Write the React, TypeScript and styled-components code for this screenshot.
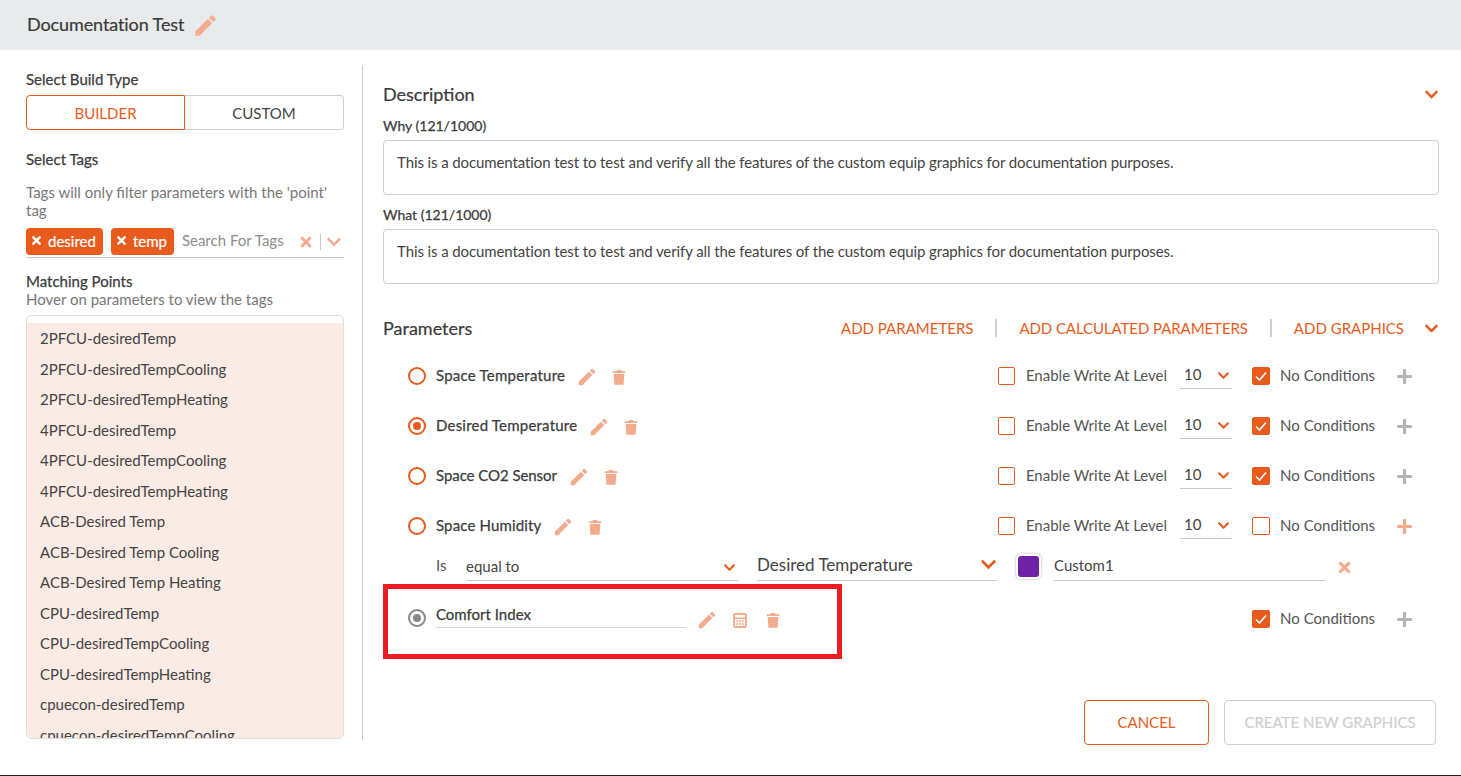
import React from 'react';
import styled, { createGlobalStyle } from 'styled-components';
import { FaTimes, FaChevronDown, FaPlus } from 'react-icons/fa';
import { MdEdit } from 'react-icons/md';

const ORANGE = '#e95b1c';
const PALE = '#f3ab8b';

const Global = createGlobalStyle`
  html, body { margin: 0; padding: 0; background: #fff; overflow: hidden; }
  body { font-family: Lato, "Open Sans", sans-serif; color: #444; font-size: 15px; }
  * { box-sizing: border-box; }
`;

const Page = styled.div`
  width: 1461px; height: 776px; display: flex; flex-direction: column;
  border-bottom: 1px solid #222; overflow: hidden;
`;
const Header = styled.header`
  height: 50px; flex: none; background: #e9eaec; display: flex; align-items: center;
  padding: 0 0 2px 27px; gap: 8px; font-size: 18px; letter-spacing: -0.1px; color: #3a3a3a; -webkit-text-stroke: 0.2px #3a3a3a;
`;
const Body = styled.div`display: flex; padding: 15px 22px 0 26px; flex: 1; min-height: 0;`;
const Side = styled.aside`
  width: 337px; height: 675px; flex: none; padding: 6px 18px 0 0; border-right: 1px solid #c9c9c9;
  display: flex; flex-direction: column;
`;
const Label = styled.div<{ $mt?: number }>`
  font-size: 15px; line-height: 17px; color: #3c3c3c; -webkit-text-stroke: 0.25px #3c3c3c;
  margin-top: ${p => p.$mt ?? 0}px;
`;
const Segments = styled.div`display: flex; height: 35px; margin-top: 7px;`;
const Segment = styled.div<{ $on?: boolean }>`
  flex: ${p => p.$on ? '0 0 159px' : '1'}; display: flex; align-items: center; justify-content: center; font-size: 15px;
  color: ${p => p.$on ? ORANGE : '#444'};
  border: 1px solid ${p => p.$on ? ORANGE : '#cfcfcf'};
  border-left-width: ${p => p.$on ? 1 : 0}px;
  border-radius: ${p => p.$on ? '4px 0 0 4px' : '0 4px 4px 0'};
`;
const Hint = styled.div<{ $mt?: number }>`
  font-size: 15px; line-height: 18px; color: #777; margin-top: ${p => p.$mt ?? 0}px;
`;
const TagRow = styled.div`
  display: flex; align-items: flex-start; height: 30px; margin-top: 9px;
  border-bottom: 1px solid #c9c9c9; flex: none;
`;
const Tag = styled.div`
  height: 27px; padding: 0 7px 2px 4px; background: ${ORANGE}; color: #fff; border-radius: 4px; display: flex; align-items: center;
  gap: 5px; font-size: 15px; margin-right: 8px; -webkit-text-stroke: 0.2px #fff;
`;
const Search = styled.span`color: #8d8d8d; font-size: 15px; flex: 1; line-height: 25px;`;
const TagIcon = styled.span<{ $mr?: number }>`
  display: inline-flex; color: ${PALE}; margin: 6px ${p => p.$mr ?? 0}px 0 0;
`;
const TagSep = styled.span`width: 1px; height: 16px; background: #c9c9c9; margin: 6px 5px 0 6px;`;
const List = styled.div`
  margin-top: 7px; height: 424px; flex: none; border: 1px solid #dedede; border-radius: 5px; overflow: hidden;
  padding-top: 7px; background: #fff;
`;
const ListFill = styled.div`background: #fbebe5; height: 100%;`;
const ListItem = styled.div`
  height: 30.5px; line-height: 30.5px; padding-left: 13px; font-size: 15px; color: #444;
`;
const Main = styled.main`flex: 1; padding: 14px 0 0 20px; min-width: 0;`;
const SectionHead = styled.div`
  display: flex; align-items: center; justify-content: space-between; height: 30px;
`;
const SectionTitle = styled.div`font-size: 18px; color: #3a3a3a; -webkit-text-stroke: 0.2px #3a3a3a;`;
const FieldLabel = styled.div<{ $mt: number }>`
  font-size: 14px; line-height: 17px; color: #3c3c3c; -webkit-text-stroke: 0.25px #3c3c3c; margin-top: ${p => p.$mt}px;
`;
const TextBox = styled.div`
  height: 55px; margin-top: 6px; border: 1px solid #cfcfcf; border-radius: 4px; padding: 12px 13px;
  font-size: 15px; line-height: 18px; color: #444; letter-spacing: -0.1px;
`;
const ParamHead = styled(SectionHead)`margin-top: 30px; padding-bottom: 2px;`;
const Actions = styled.div`display: flex; align-items: center; color: ${ORANGE}; font-size: 15px;`;
const ActionSep = styled.span`width: 2px; height: 18px; background: #d0d0d0; margin: 0 22px 0 22px;`;
const Tight = styled.span`letter-spacing: -0.08px;`;
const HeadChevron = styled.span`display: inline-flex; color: ${ORANGE}; margin-left: 20px;`;
const Rows = styled.div`margin-top: 7px; padding-left: 25px;`;
const Row = styled.div`display: flex; align-items: center; height: 50px;`;
const Radio = styled.span<{ $on?: boolean; $grey?: boolean }>`
  width: 18px; height: 18px; flex: none; border-radius: 50%; border: 2px solid ${p => p.$grey ? '#888' : ORANGE};
  display: flex; align-items: center; justify-content: center; margin: ${p => p.$grey ? '-2px' : '0'} 10px 0 0;
  &::after { content: ''; width: 8px; height: 8px; border-radius: 50%; display: ${p => p.$on ? 'block' : 'none'}; background: ${p => p.$grey ? '#888' : ORANGE}; }
`;
const ParamName = styled.span<{ $track: number }>`
  font-size: 15px; color: #3c3c3c; -webkit-text-stroke: 0.25px #3c3c3c; margin-right: 11px; padding-bottom: 2px;
  letter-spacing: ${p => p.$track}px;
`;
const IconBtn = styled.span<{ $gap?: number; $ml?: number }>`
  display: inline-flex; color: ${PALE}; margin: 2px ${p => p.$gap ?? 0}px 0 ${p => p.$ml ?? 0}px;
`;
const Right = styled.div`margin-left: auto; display: flex; align-items: center; padding-right: 26px;`;
const Box = styled.span<{ $on?: boolean; $wide?: boolean }>`
  width: ${p => p.$wide ? 18 : 17}px; height: 18px; border: 1px solid ${ORANGE}; border-radius: 2px; display: inline-flex;
  align-items: center; justify-content: center; background: ${p => p.$on ? ORANGE : '#fff'};
  margin-right: ${p => p.$wide ? 10 : 11}px; flex: none;
`;
const RowText = styled.span`font-size: 15px; color: #555; padding-bottom: 2px;`;
const Level = styled.span`
  width: 52px; height: 26px; margin: 0 20px 0 13px; display: flex; align-items: center; justify-content: space-between;
  border-bottom: 1px solid #c9c9c9; padding: 0 2px 4px 4px; font-size: 15px; color: #444;
`;
const SmallChevron = styled.span<{ $mr?: number; $top?: number }>`
  display: inline-flex; color: ${ORANGE}; margin: ${p => p.$top ?? 4}px ${p => p.$mr ?? 0}px 0 0;
`;
const Plus = styled.span<{ $on?: boolean }>`
  display: inline-flex; margin-left: 21px; color: ${p => p.$on ? PALE : '#b5b5b5'};
`;
const CondRow = styled.div`display: flex; align-items: center; height: 30px; padding-left: 28px;`;
const CondIs = styled.span`font-size: 15px; color: #555; width: 30px; margin-top: -2px;`;
const Underlined = styled.div<{ $w: number; $size?: number; $ml?: number; $up?: boolean }>`
  width: ${p => p.$w}px; height: 30px; margin-left: ${p => p.$ml ?? 0}px; border-bottom: 1px solid #c9c9c9;
  padding-bottom: ${p => p.$up ? 2 : 0}px;
  display: flex; align-items: center; justify-content: space-between; font-size: ${p => p.$size ?? 15}px;
  color: #444; flex: none;
`;
const Swatch = styled.span`
  width: 25px; height: 25px; flex: none; border-radius: 5px; background: #6f22a8; border: 2px solid #fff;
  box-shadow: 0 0 3px rgba(0,0,0,.3); margin: 0 13px 0 19px;
`;
const HighlightRow = styled.div`display: flex; align-items: center; margin-top: 3px;`;
const Highlight = styled.div`
  width: 459px; height: 75px; flex: none; margin-left: -25px; border: 5px solid #ed1c24;
`;
const HighlightInner = styled.div`display: flex; align-items: center; height: 60px; padding-left: 20px;`;
const NameInput = styled.div`
  width: 250px; height: 26px; padding-top: 3px; border-bottom: 1px solid #d5d5d5; font-size: 15px; color: #3c3c3c;
  -webkit-text-stroke: 0.25px #3c3c3c; margin: -8px 10px 0 0; line-height: 18px;
`;
const RaisedRight = styled(Right)`margin-top: -5px;`;
const Footer = styled.div`display: flex; justify-content: flex-end; gap: 15px; margin-top: 41px; padding-right: 3px;`;
const Btn = styled.div<{ $off?: boolean; $w: number }>`
  width: ${p => p.$w}px; height: 45px; padding-bottom: 2px; border-radius: 4px; display: flex; align-items: center; justify-content: center;
  font-size: 15px; border: 1px solid ${p => p.$off ? '#d0d0d0' : ORANGE}; color: ${p => p.$off ? '#cfcfcf' : ORANGE};
  -webkit-text-stroke: ${p => p.$off ? '0.2px #cfcfcf' : '0'};
`;

const Calc = () => (
  <svg width="14" height="15" viewBox="0 0 14 15" fill="none" stroke={PALE} strokeWidth="1.8">
    <rect x="1" y="1" width="12" height="13" rx="1" />
    <path d="M1 5.2h12M3 8h2M6 8h2M9 8h2M3 11h2M6 11h2M9 11h2" strokeWidth="1.6" />
  </svg>
);
const Trash = () => (
  <svg width="14" height="16" viewBox="0 0 14 16" fill={PALE}>
    <path d="M.7 2.2h3.6L5 1h4l.7 1.2h3.6v1.9H.7z" />
    <path d="M1.6 4.9h10.8l-.8 10c0 .5-.4.9-1 .9H3.4c-.6 0-1-.4-1-.9z" />
  </svg>
);
const Check = () => (
  <svg width="14" height="12" viewBox="0 0 14 12" fill="none" stroke="#fff" strokeWidth="1.6">
    <path d="M2 6.5l3.5 3.5L12 2.5" />
  </svg>
);

const points = [
  '2PFCU-desiredTemp', '2PFCU-desiredTempCooling', '2PFCU-desiredTempHeating',
  '4PFCU-desiredTemp', '4PFCU-desiredTempCooling', '4PFCU-desiredTempHeating',
  'ACB-Desired Temp', 'ACB-Desired Temp Cooling', 'ACB-Desired Temp Heating',
  'CPU-desiredTemp', 'CPU-desiredTempCooling', 'CPU-desiredTempHeating',
  'cpuecon-desiredTemp', 'cpuecon-desiredTempCooling',
];
const params = [
  { name: 'Space Temperature', checked: true, track: 0.23 },
  { name: 'Desired Temperature', checked: true, on: true, track: 0.21 },
  { name: 'Space CO2 Sensor', checked: true, track: -0.06 },
  { name: 'Space Humidity', checked: false, track: 0.14 },
];
const text = 'This is a documentation test to test and verify all the features of the custom equip graphics for documentation purposes.';

const Conditions = ({ checked }: { checked: boolean }) => (
  <>
    <Box $wide $on={checked}>{checked && <Check />}</Box>
    <RowText>No Conditions</RowText>
    <Plus $on={!checked}><FaPlus size={17} /></Plus>
  </>
);

export default function App() {
  return (
    <Page>
      <Global />
      <Header>
        Documentation Test
        <IconBtn><MdEdit size={27} /></IconBtn>
      </Header>
      <Body>
        <Side>
          <Label>Select Build Type</Label>
          <Segments>
            <Segment $on>BUILDER</Segment>
            <Segment>CUSTOM</Segment>
          </Segments>
          <Label $mt={21}>Select Tags</Label>
          <Hint $mt={15}>Tags will only filter parameters with the 'point' tag</Hint>
          <TagRow>
            <Tag><FaTimes size={13} />desired</Tag>
            <Tag><FaTimes size={13} />temp</Tag>
            <Search>Search For Tags</Search>
            <TagIcon><FaTimes size={16} /></TagIcon>
            <TagSep />
            <TagIcon $mr={2}><FaChevronDown size={16} /></TagIcon>
          </TagRow>
          <Label $mt={15}>Matching Points</Label>
          <Hint>Hover on parameters to view the tags</Hint>
          <List>
            <ListFill>
              {points.map(p => <ListItem key={p}>{p}</ListItem>)}
            </ListFill>
          </List>
        </Side>
        <Main>
          <SectionHead>
            <SectionTitle>Description</SectionTitle>
            <HeadChevron><FaChevronDown size={15} /></HeadChevron>
          </SectionHead>
          <FieldLabel $mt={8}>Why (121/1000)</FieldLabel>
          <TextBox>{text}</TextBox>
          <FieldLabel $mt={11}>What (121/1000)</FieldLabel>
          <TextBox>{text}</TextBox>
          <ParamHead>
            <SectionTitle>Parameters</SectionTitle>
            <Actions>
              ADD PARAMETERS<ActionSep /><Tight>ADD CALCULATED PARAMETERS</Tight><ActionSep />ADD GRAPHICS
              <HeadChevron><FaChevronDown size={15} /></HeadChevron>
            </Actions>
          </ParamHead>
          <Rows>
            {params.map(p => (
              <Row key={p.name}>
                <Radio $on={p.on} />
                <ParamName $track={p.track}>{p.name}</ParamName>
                <IconBtn $gap={14}><MdEdit size={22} /></IconBtn>
                <IconBtn><Trash /></IconBtn>
                <Right>
                  <Box />
                  <RowText>Enable Write At Level</RowText>
                  <Level>10<SmallChevron><FaChevronDown size={13} /></SmallChevron></Level>
                  <Conditions checked={p.checked} />
                </Right>
              </Row>
            ))}
            <CondRow>
              <CondIs>Is</CondIs>
              <Underlined $w={272}>
                equal to
                <SmallChevron $mr={2}><FaChevronDown size={13} /></SmallChevron>
              </Underlined>
              <Underlined $w={240} $size={17} $ml={19} $up>
                Desired Temperature
                <SmallChevron $top={0}><FaChevronDown size={17} /></SmallChevron>
              </Underlined>
              <Swatch />
              <Underlined $w={272} $up>Custom1</Underlined>
              <IconBtn $ml={10}><FaTimes size={17} /></IconBtn>
            </CondRow>
            <HighlightRow>
              <Highlight>
                <HighlightInner>
                  <Radio $on $grey />
                  <NameInput>Comfort Index</NameInput>
                  <IconBtn $gap={15}><MdEdit size={22} /></IconBtn>
                  <IconBtn $gap={19}><Calc /></IconBtn>
                  <IconBtn><Trash /></IconBtn>
                </HighlightInner>
              </Highlight>
              <RaisedRight><Conditions checked /></RaisedRight>
            </HighlightRow>
          </Rows>
          <Footer>
            <Btn $w={125}>CANCEL</Btn>
            <Btn $w={212} $off>CREATE NEW GRAPHICS</Btn>
          </Footer>
        </Main>
      </Body>
    </Page>
  );
}
